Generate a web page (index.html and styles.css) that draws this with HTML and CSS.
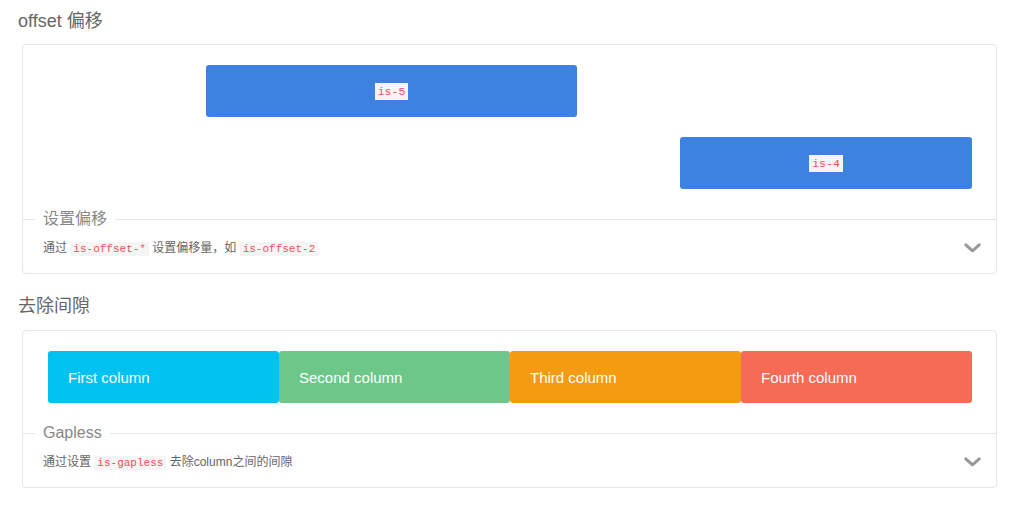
FILE: index.html
```html
<!DOCTYPE html>
<html lang="zh-CN">
<head>
   <meta charset="UTF-8">
   <meta name="viewport" content="width=device-width">
   <title>Columns</title>
   <link rel="stylesheet" href="styles.css">
</head>
<body>
   <h2 class="demo-title">offset 偏移</h2>
   <div class="demo-card">
       <div class="demo-body">
           <div class="columns">
               <div class="column is-5 is-offset-2"><div class="box blue centered"><code>is-5</code></div></div>
           </div>
           <div class="columns">
               <div class="column is-4 is-offset-8"><div class="box blue centered"><code>is-4</code></div></div>
           </div>
       </div>
       <div class="demo-meta">
           <span class="legend">设置偏移</span>
           <p>通过 <code>is-offset-*</code> 设置偏移量，如 <code>is-offset-2</code></p>
           <svg class="toggle" width="17" height="10" viewBox="0 0 17 10"><path d="M1.8 1.8 L8.5 7.8 L15.2 1.8" fill="none" stroke="currentColor" stroke-width="3" stroke-linecap="round" stroke-linejoin="round"/></svg>
       </div>
   </div>

   <h2 class="demo-title second">去除间隙</h2>
   <div class="demo-card">
       <div class="demo-body">
           <div class="columns is-gapless">
               <div class="column"><div class="box cyan">First column</div></div>
               <div class="column"><div class="box green">Second column</div></div>
               <div class="column"><div class="box orange">Third column</div></div>
               <div class="column"><div class="box red">Fourth column</div></div>
           </div>
       </div>
       <div class="demo-meta">
           <span class="legend">Gapless</span>
           <p>通过设置 <code>is-gapless</code> 去除column之间的间隙</p>
           <svg class="toggle" width="17" height="10" viewBox="0 0 17 10"><path d="M1.8 1.8 L8.5 7.8 L15.2 1.8" fill="none" stroke="currentColor" stroke-width="3" stroke-linecap="round" stroke-linejoin="round"/></svg>
       </div>
   </div>
</body>
</html>
```

FILE: styles.css
```css
body {
    font-family: "Liberation Sans", "Noto Sans CJK SC", sans-serif;
    margin: 0;
    padding: 0 20px 0 22px;
    background-color: #ffffff;
    color: #666;
}
.demo-title {
    font-size: 18px;
    font-weight: normal;
    line-height: 24px;
    color: #666;
    margin: 9px 0 11px -4px;
}
.demo-title.second { margin: 20px 0 12px -4px; }
.demo-card {
    border: 1px solid #e6e6e6;
    border-radius: 4px;
}
.demo-body {
    display: flex;
    flex-direction: column;
    gap: 20px;
    padding: 20px 24px 30px 25px;
}
.columns {
    display: flex;
    margin: 0 -12px;
}
.column {
    padding: 0 12px;
    flex: 1 1 0;
}
.column.is-5 { flex: none; width: 41.66667%; box-sizing: border-box; }
.column.is-4 { flex: none; width: 33.33333%; box-sizing: border-box; }
.column.is-offset-2 { margin-left: 16.66667%; }
.column.is-offset-8 { margin-left: 66.66667%; }
.columns.is-gapless { margin: 0; }
.columns.is-gapless .column { padding: 0; }
.box {
    height: 52px;
    border-radius: 3px;
    display: flex;
    align-items: center;
    padding-left: 20px;
    color: #fff;
    font-size: 15px;
}
.box.centered {
    justify-content: center;
    padding-left: 0;
}
.blue { background-color: #3c82de; }
.cyan { background-color: #00c1ef; }
.green { background-color: #6cc788; }
.orange { background-color: #f39c12; }
.red { background-color: #f66b56; }
code {
    font-family: "Liberation Mono", monospace;
    font-size: 11px;
    line-height: 13px;
    background-color: #f5f5f5;
    color: #f4505a;
    padding: 1px 3px;
}
.box code { padding: 2px 3px; font-size: 11.5px; }
.demo-meta {
    position: relative;
    border-top: 1px solid #e6e6e6;
    padding: 18px 15px 15px 20px;
    display: flex;
    align-items: center;
    justify-content: space-between;
}
.demo-meta p {
    margin: 0;
    font-size: 12px;
    line-height: 20px;
    color: #666;
}
.legend {
    position: absolute;
    left: 12px;
    top: -11px;
    padding: 0 8px;
    background-color: #fff;
    font-size: 16px;
    line-height: 20px;
    color: #888;
}
.toggle { color: #999; }
```
